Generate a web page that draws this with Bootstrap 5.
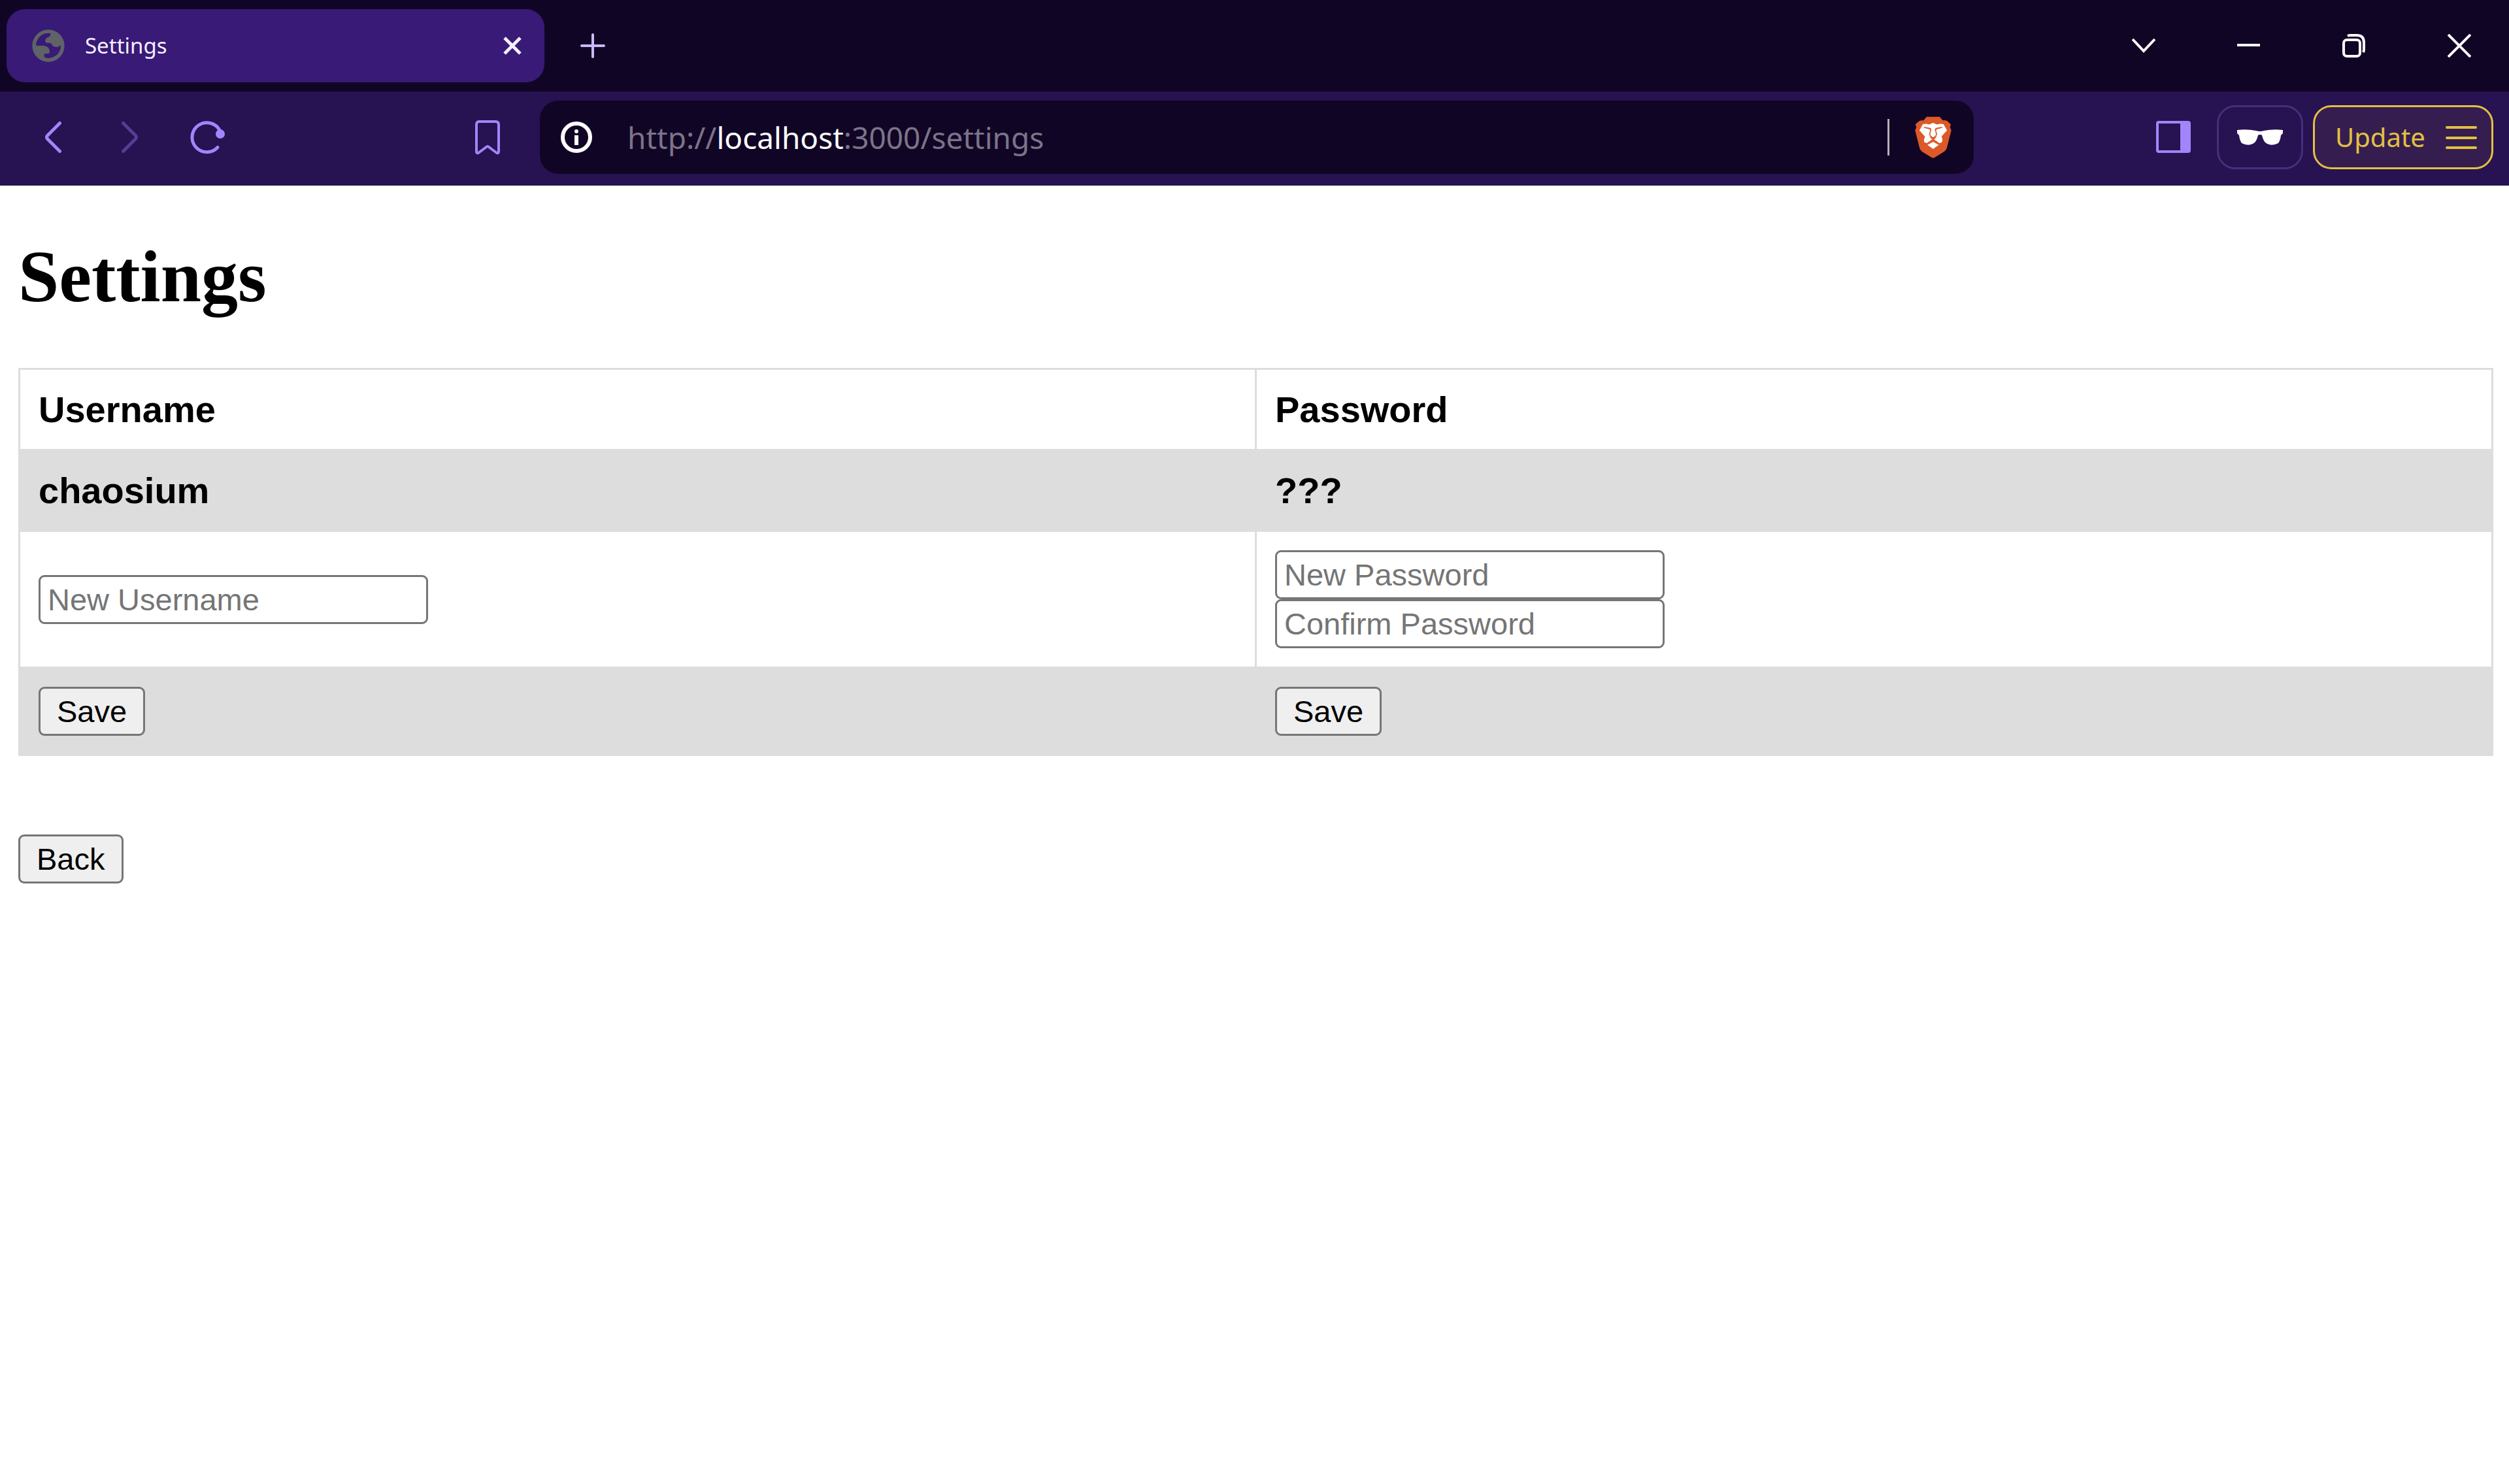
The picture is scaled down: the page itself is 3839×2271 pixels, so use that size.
<!DOCTYPE html>
<html lang="en">
<head>
<meta charset="utf-8">
<meta name="viewport" content="width=device-width, initial-scale=1">
<title>Settings</title>
<link href="https://cdn.jsdelivr.net/npm/bootstrap@5.3.0/dist/css/bootstrap.min.css" rel="stylesheet">
<style>
  body { background: #fff; color: #000; }
  button { color: inherit; }
  svg { display: block; flex: none; }

  /* browser frame */
  .browser-ui { font-family: "Noto Sans", "Open Sans", sans-serif; }
  .tab-strip { background: #110526; padding: 14px 0 14px 10px; }
  .page-tab { width: 823px; height: 112px; padding: 0 35px 0 39px; gap: 31px; border-radius: 28px; background: #391a76; color: #f4efff; font-size: 33px; }
  .ui-btn { width: 112px; height: 112px; padding: 0; border: 0; background: transparent; }
  .new-tab { margin-left: 18px; color: #c9bbf9; }
  .window-btns { gap: 8px; color: #fff; }
  .window-btns .ui-btn { width: 153px; }
  .tool-strip { background: #271252; padding: 14px 24px 18px 25px; color: #a285fb; }
  .nav-btns { gap: 6px; }
  .nav-btns .ui-btn:disabled { color: #573d96; }
  .bookmark-btn { margin: 0 24px 0 317px; }
  .address-bar { height: 112px; margin-right: 249px; padding: 0 34px 0 32px; border-radius: 28px; background: #110526; color: #fff; }
  .address-text { margin-left: 54px; font-size: 46px; line-height: 64px; color: #7c7488; white-space: nowrap; outline: 0; }
  .address-text b { color: #fff; font-weight: 400; }
  .bar-rule { width: 3px; height: 56px; margin-right: 39px; background: #b3b3b3; }
  .outline-btn { height: 98px; padding: 0; border: 3px solid #45307a; border-radius: 28px; background: transparent; }
  .private-btn { width: 132px; margin: 0 15px 0 11px; color: #fff; }
  .update-btn { width: 276px; padding: 0 22px 0 31px; border-color: #e3c043; background: #351e4f; color: #e3c043; font-size: 40px; }

  /* page */
  .settings-page { padding: 0 24px 28px 28px; font-family: "Liberation Sans", Arial, sans-serif; }
  .page-title { margin: 76px 0; font: 700 112px/127px "Liberation Serif", "Times New Roman", serif; }
  .settings-grid { table-layout: fixed; color: #000; font-size: 56px; line-height: 65px; }
  .settings-grid > tbody > tr > * { padding: 28px; border: 3px solid #ddd; background: transparent; color: #000; }
  .settings-grid > tbody > tr:nth-child(even) { background: #ddd; }
  .field { width: 596px; max-width: 100%; height: 75px; padding: 0 11px; border: 3px solid #767676; border-radius: 9px; background: #fff; font-size: 47px; line-height: 54px; }
  .field::placeholder { color: #757575; opacity: 1; }
  .plain-btn { height: 75px; padding: 0 25px; border: 3px solid #767676; border-radius: 9px; background: #efefef; color: #000; font-size: 47px; line-height: 54px; }
  .back-btn { margin-top: 120px; }
</style>
</head>
<body>
<header class="browser-ui">
  <div class="tab-strip d-flex align-items-center">
    <div class="page-tab d-flex align-items-center">
      <svg width="50" height="50" viewBox="147 135 150 150" aria-hidden="true"><circle cx="222" cy="210" r="74" fill="#5f6368"/><path fill="#391a76" d="M165 209A57 57 0 0 1 232 153V158Q230 168 218 172Q207 178 208 188Q208 197 218 197H230Q237 199 240 208Q246 216 260 216Q272 215 279 207A57 57 0 0 1 207 265Q203 262 203 256V250Q203 246 208 246H222Q228 246 228 238V236Q226 212 200 210Z"/></svg>
      <span class="flex-grow-1">Settings</span>
      <button type="button" class="border-0 bg-transparent p-0" aria-label="Close tab"><svg width="28" height="28" viewBox="0 0 28 28" stroke="currentColor" stroke-width="5"><path d="M2 2 26 26M26 2 2 26"/></svg></button>
    </div>
    <button type="button" class="ui-btn new-tab d-flex align-items-center justify-content-center" aria-label="New tab"><svg width="38" height="38" viewBox="0 0 38 38" stroke="currentColor" stroke-width="4" stroke-linecap="round"><path d="M19 2V36M2 19H36"/></svg></button>
    <div class="window-btns d-flex ms-auto">
      <button type="button" class="ui-btn d-flex align-items-center justify-content-center" aria-label="Search tabs"><svg width="36" height="26" viewBox="0 0 36 26" fill="none" stroke="currentColor" stroke-width="4"><path d="M1 3 18 21 35 3"/></svg></button>
      <button type="button" class="ui-btn d-flex align-items-center justify-content-center" aria-label="Minimize"><svg width="36" height="36" viewBox="0 0 36 36" fill="currentColor"><path d="M0 15H35V19H0Z"/></svg></button>
      <button type="button" class="ui-btn d-flex align-items-center justify-content-center" aria-label="Restore"><svg width="36" height="36" viewBox="0 0 36 36" fill="none" stroke="currentColor" stroke-width="4"><rect x="2" y="9" width="25" height="25" rx="5"/><path d="M8 3Q10 2 13 2H22Q33 2 33 13V23Q33 26 32 28"/></svg></button>
      <button type="button" class="ui-btn d-flex align-items-center justify-content-center" aria-label="Close window"><svg width="36" height="36" viewBox="0 0 36 36" stroke="currentColor" stroke-width="4"><path d="M1 1 35 35M35 1 1 35"/></svg></button>
    </div>
  </div>
  <div class="tool-strip d-flex align-items-center">
    <nav class="nav-btns d-flex" aria-label="Browser history">
      <button type="button" class="ui-btn d-flex align-items-center justify-content-center" aria-label="Back one page"><svg width="26" height="50" viewBox="67 185 26 50" fill="none" stroke="currentColor" stroke-width="5" stroke-linecap="round" stroke-linejoin="round"><path d="M90.500 188.500 71.500 207.500Q69.500 210 71.500 212.500L90.500 231.500"/></svg></button>
      <button type="button" class="ui-btn d-flex align-items-center justify-content-center" aria-label="Forward" disabled><svg width="26" height="50" viewBox="187 185 26 50" fill="none" stroke="currentColor" stroke-width="5" stroke-linecap="round" stroke-linejoin="round"><path d="M189.500 188.500 208.500 207.500Q210.500 210 208.500 212.500L189.500 231.500"/></svg></button>
      <button type="button" class="ui-btn d-flex align-items-center justify-content-center" aria-label="Reload"><svg width="54" height="54" viewBox="291 182 54 54" fill="none" stroke="currentColor" stroke-width="5" stroke-linecap="round"><path d="M334 224.500A22.500 22.500 0 1 1 337.500 199"/><circle cx="338" cy="204" r="7" fill="currentColor" stroke="none"/></svg></button>
    </nav>
    <button type="button" class="ui-btn bookmark-btn d-flex align-items-center justify-content-center" aria-label="Bookmark this page"><svg width="40" height="54" viewBox="0 0 40 54" fill="none" stroke="currentColor" stroke-width="4" stroke-linejoin="round"><path d="M7 3H32Q37 3 37 8V49Q37 52 34 51L22 42Q20 40 18 42L6 51Q3 52 3 49V8Q3 3 7 3Z"/></svg></button>
    <div class="address-bar d-flex align-items-center flex-grow-1">
      <button type="button" class="border-0 bg-transparent p-0" aria-label="Site information"><svg width="48" height="48" viewBox="0 0 48 48"><circle cx="24" cy="24" r="21" fill="none" stroke="currentColor" stroke-width="6"/><circle cx="24" cy="15" r="3" fill="currentColor"/><path d="M21 21H27V36H21Z" fill="currentColor"/></svg></button>
      <div class="address-text flex-grow-1" role="textbox" contenteditable="true" spellcheck="false" aria-label="Address">http://<b>localhost</b>:3000/settings</div>
      <span class="bar-rule"></span>
      <button type="button" class="border-0 bg-transparent p-0" aria-label="Shields"><svg width="56" height="64" viewBox="209 113 169 193"><path fill="#dc5a27" d="M263 115H323L338 132Q355 129 364 139L375 151 371 163 377 178 356 261Q352 271 343 277L300 303Q293 307 286 303L243 277Q235 271 231 261L210 178 216 163 211 151 223 139Q231 130 249 132Z"/><path fill="#fff" d="M246 149 262 148 276 151 293 143 310 151 325 148 341 149 357 178 332 206Q338 218 335 230 330 237 322 237L298 220H288L264 237Q255 236 251 230 249 218 256 207L230 178ZM293 231 319 245 293 264 267 245Z"/><path fill="none" stroke="#dc5a27" stroke-width="5" d="M251 164Q264 168 279 169L282 176 277 195 281 205 293 213 305 205 309 195 304 176 307 169Q322 168 335 164M293 212V224"/><path fill="#dc5a27" d="M250 162Q270 162 284 170L285 177ZM336 162Q316 162 302 170L301 177ZM276 207 293 212 310 207 298 219V226H288V219Z"/></svg></button>
    </div>
    <button type="button" class="ui-btn d-flex align-items-center justify-content-center" aria-label="Side panel"><svg width="54" height="56" viewBox="0 0 54 56"><path fill="currentColor" fill-rule="evenodd" d="M5 3H50Q54 3 54 7V48Q54 52 50 52H5Q1 52 1 48V7Q1 3 5 3ZM5 7V48H38V7Z"/></svg></button>
    <button type="button" class="outline-btn private-btn d-flex align-items-center justify-content-center" aria-label="Private window"><svg width="70" height="24" viewBox="0 0 70 24" fill="currentColor"><path d="M0 1Q15-1 29 2Q35 4 41 2Q55-1 70 1V6L67 9Q66 17 63 21Q52 27 43 20Q40 17 38 9Q35 7 32 9Q30 17 27 20Q18 27 7 21Q4 17 3 9L0 6Z"/></svg></button>
    <button type="button" class="outline-btn update-btn d-flex align-items-center justify-content-between"><span>Update</span><svg width="48" height="36" viewBox="0 0 48 36" stroke="currentColor" stroke-width="4" stroke-linecap="round"><path d="M2 3H46M2 19H46M2 34H46"/></svg></button>
  </div>
</header>

<main class="settings-page">
  <h1 class="page-title">Settings</h1>
  <form id="username-form"></form>
  <form id="password-form"></form>
  <table class="settings-grid table table-bordered align-middle mb-0">
    <tbody>
      <tr><th scope="col">Username</th><th scope="col">Password</th></tr>
      <tr><th>chaosium</th><th>???</th></tr>
      <tr>
        <td>
          <input class="field d-block" id="new-username" form="username-form" type="text" placeholder="New Username" aria-label="New Username">
        </td>
        <td>
          <input class="field d-block" id="new-password" form="password-form" type="password" placeholder="New Password" aria-label="New Password">
          <input class="field d-block" id="confirm-password" form="password-form" type="password" placeholder="Confirm Password" aria-label="Confirm Password">
        </td>
      </tr>
      <tr>
        <td><button class="plain-btn d-block" type="submit" form="username-form">Save</button></td>
        <td><button class="plain-btn d-block" type="submit" form="password-form">Save</button></td>
      </tr>
    </tbody>
  </table>
  <button type="button" class="plain-btn back-btn d-block">Back</button>
</main>
<script src="https://cdn.jsdelivr.net/npm/bootstrap@5.3.0/dist/js/bootstrap.bundle.min.js"></script>
</body>
</html>
